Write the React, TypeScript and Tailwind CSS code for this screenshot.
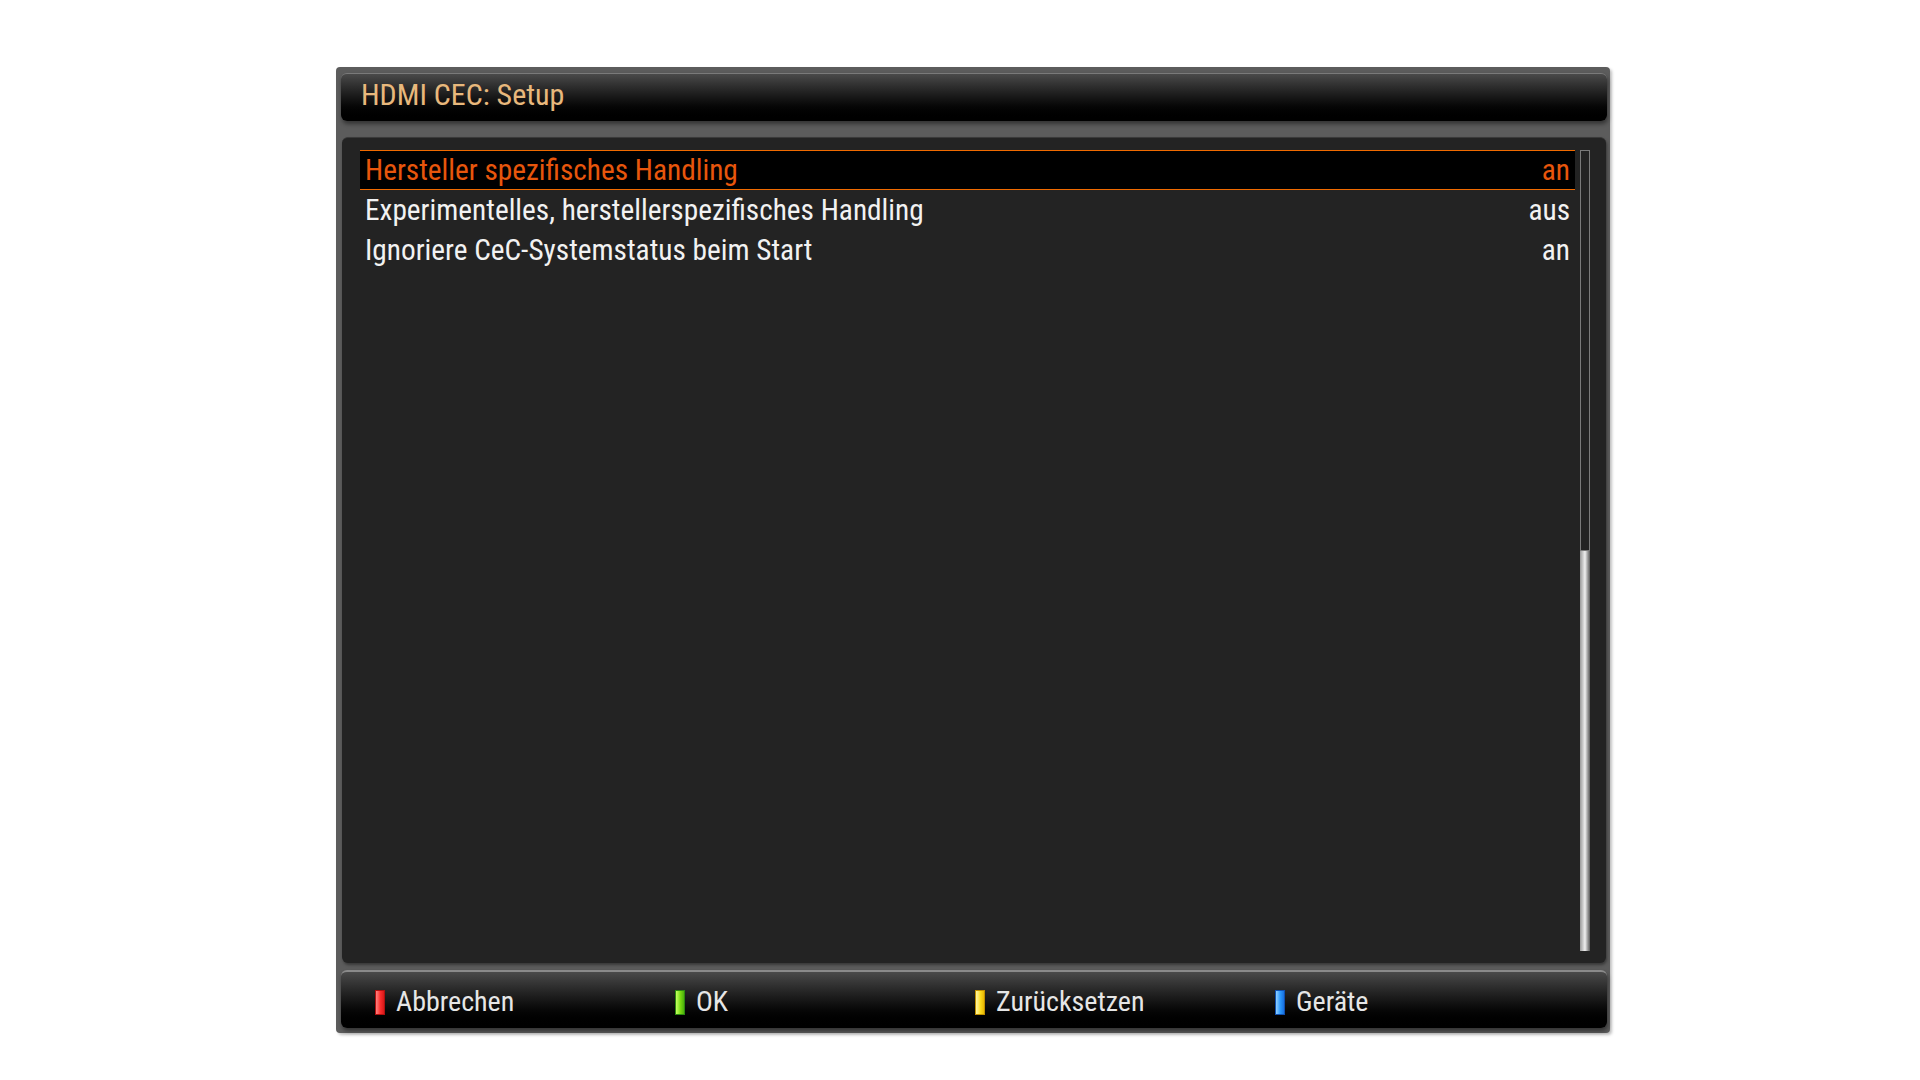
import React from "react";

const FONT = { fontFamily: "'Roboto Condensed', Roboto, 'Liberation Sans', sans-serif" };

interface SetupRow {
  label: string;
  value: string;
}

const ROWS: SetupRow[] = [
  { label: "Hersteller spezifisches Handling", value: "an" },
  { label: "Experimentelles, herstellerspezifisches Handling", value: "aus" },
  { label: "Ignoriere CeC-Systemstatus beim Start", value: "an" },
];

const KEYS = [
  { label: "Abbrechen", cls: "border-[#b01010] bg-gradient-to-r from-[#ff8080] via-[#ff3030] to-[#d81818]" },
  { label: "OK", cls: "border-[#2c8a10] bg-gradient-to-r from-[#c8ff60] via-[#7ee012] to-[#4cb00c]" },
  { label: "Zurücksetzen", cls: "border-[#c09000] bg-gradient-to-r from-[#fff6a0] via-[#ffe020] to-[#e8b800]" },
  { label: "Geräte", cls: "border-[#1050b0] bg-gradient-to-r from-[#90d0ff] via-[#2e9cff] to-[#1870e0]" },
];

function ColorKey({ cls }: { cls: string }) {
  return <span className={`inline-block h-[25px] w-[10px] shrink-0 border-[1.5px] ${cls}`} />;
}

export default function App() {
  return (
    <div className="min-h-screen w-full bg-white pl-[336px] pt-[67px]" style={FONT}>
      <div className="flex h-[966px] w-[1274px] flex-col rounded-[4px] bg-[#5c5c5c] pb-[5px] pl-[5px] pr-[3px] pt-[6px] shadow-[2px_2px_3px_rgba(0,0,0,0.25)]">
        {/* title bar */}
        <div className="flex h-[48px] items-center rounded-[6px] border-t border-[#7a7a7a] bg-gradient-to-b from-[#4a4a4a] to-[#000000] pb-[6px] pl-[20px] shadow-[1px_3px_4px_rgba(0,0,0,0.45)]">
          <span className="text-[30px] leading-none text-[#e8b87c]">HDMI CEC: Setup</span>
        </div>

        {/* list */}
        <div className="ml-[1px] mr-[1px] mt-[16px] flex min-h-0 flex-1 rounded-[6px] border-t border-[#3a3a3a] bg-[#232323] pl-[18px] pr-[16px] pt-[12px] shadow-[1px_2px_3px_rgba(0,0,0,0.4)]">
          <div className="flex flex-1 flex-col">
            {ROWS.map((row, i) => {
              const selected = i === 0;
              return (
                <div
                  key={row.label}
                  className={`flex h-[40px] items-center justify-between pl-[5px] pr-[5px] pt-[2px] text-[29.3px] leading-none ${
                    selected
                      ? "border-y-[1.5px] border-[#f06a00] bg-black text-[#e8560c]"
                      : "border-y-[1.5px] border-transparent text-[#f2f2f2]"
                  }`}
                >
                  <span>{row.label}</span>
                  <span>{row.value}</span>
                </div>
              );
            })}
          </div>
          {/* scrollbar */}
          <div className="ml-[5px] flex w-[10px] flex-col pb-[12px]">
            <div className="h-[401px] border border-[#7a7a7a]" />
            <div className="flex-1 bg-gradient-to-r from-[#9a9a9a] via-[#f0f0f0] to-[#5a5a5a]" />
          </div>
        </div>

        {/* footer */}
        <div className="mt-[7px] flex h-[58px] items-center rounded-[6px] border-t-2 border-[#8a8a8a] bg-gradient-to-b from-[#4a4a4a] to-[#000000] pl-[34px] pt-[4px] shadow-[1px_3px_4px_rgba(0,0,0,0.45)]">
          {KEYS.map((k) => (
            <div key={k.label} className="flex w-[300px] items-center gap-[11px]">
              <ColorKey cls={k.cls} />
              <span className="text-[28px] leading-none text-[#e6e6e6]">{k.label}</span>
            </div>
          ))}
        </div>
      </div>
    </div>
  );
}
